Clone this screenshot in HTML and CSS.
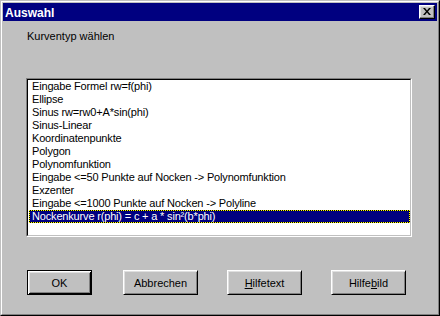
FILE: index.html
```html
<!DOCTYPE html>
<html lang="de">
<head>
<meta charset="utf-8">
<title>Auswahl</title>
<link rel="stylesheet" href="styles.css">
</head>
<body>
<div class="window">
  <div class="frame">
    <div class="titlebar">
      <span class="title">Auswahl</span>
      <button class="close" type="button" aria-label="Schließen">
        <svg width="8" height="7" viewBox="0 0 8 7"><path d="M0 0h2l2 2.4 2-2.4h2l-3 3.5 3 3.5h-2l-2-2.4-2 2.4h-2l3-3.5z" fill="#000"/></svg>
      </button>
    </div>
    <div class="body">
      <div class="label">Kurventyp wählen</div>
      <div class="listbox">
        <ul class="list">
          <li class="item">Eingabe Formel rw=f(phi)</li>
          <li class="item">Ellipse</li>
          <li class="item">Sinus rw=rw0+A*sin(phi)</li>
          <li class="item">Sinus-Linear</li>
          <li class="item">Koordinatenpunkte</li>
          <li class="item">Polygon</li>
          <li class="item">Polynomfunktion</li>
          <li class="item">Eingabe &lt;=50 Punkte auf Nocken -&gt; Polynomfunktion</li>
          <li class="item">Exzenter</li>
          <li class="item">Eingabe &lt;=1000 Punkte auf Nocken -&gt; Polyline</li>
          <li class="item selected">Nockenkurve r(phi) = c + a * sin²(b*phi)</li>
        </ul>
      </div>
      <div class="buttons">
        <button class="btn default ok" type="button">OK</button>
        <button class="btn" type="button">Abbrechen</button>
        <button class="btn" type="button"><u>H</u>ilfetext</button>
        <button class="btn" type="button">Hilfe<u>b</u>ild</button>
      </div>
    </div>
  </div>
</div>
</body>
</html>
```
FILE: styles.css
```css
html, body {
  margin: 0;
  padding: 0;
  background: #c0c0c0;
}
body {
  font-family: "Liberation Sans", Arial, sans-serif;
  font-size: 11px;
  color: #000;
}
.window {
  width: 440px;
  height: 316px;
  box-sizing: border-box;
  border: 1px solid;
  border-color: #c0c0c0 #000 #000 #c0c0c0;
  background: #c0c0c0;
}
.frame {
  height: 100%;
  box-sizing: border-box;
  border: 1px solid;
  border-color: #fff #808080 #808080 #fff;
  padding: 1px;
  display: flex;
  flex-direction: column;
}
.titlebar {
  height: 18px;
  background: #000080;
  display: flex;
  align-items: center;
  justify-content: space-between;
  padding: 0 2px 0 2px;
}
.title {
  color: #fff;
  font-weight: bold;
  font-size: 12px;
  line-height: 14px;
  margin-top: 1px;
}
.close {
  width: 16px;
  height: 14px;
  padding: 0;
  margin: 0;
  box-sizing: border-box;
  background: #c0c0c0;
  border: 1px solid;
  border-color: #fff #000 #000 #fff;
  box-shadow: inset -1px -1px #808080, inset 1px 1px #dfdfdf;
  display: flex;
  align-items: center;
  justify-content: center;
}
.close svg {
  display: block;
  margin: 0 0 1px 0;
}
.body {
  display: flex;
  flex-direction: column;
}
.label {
  margin: 9px 0 0 24px;
  line-height: 13px;
}
.listbox {
  margin: 35px 0 0 23px;
  width: 386px;
  height: 159px;
  box-sizing: border-box;
  border: 1px solid;
  border-color: #808080 #fff #fff #808080;
}
.list {
  list-style: none;
  margin: 0;
  padding: 0 0 0 1px;
  height: 100%;
  box-sizing: border-box;
  border: 1px solid;
  border-color: #000 #c0c0c0 #c0c0c0 #000;
  background: #fff;
}
.item {
  height: 13px;
  line-height: 11px;
  box-sizing: border-box;
  border: 1px solid transparent;
  padding: 0 0 0 2px;
  white-space: nowrap;
  letter-spacing: -0.17px;
}
.item.selected {
  color: #fff;
  border: 1px dotted #ffff00;
  background: linear-gradient(#000080, #000080) padding-box, #000;
}
.buttons {
  display: flex;
  margin: 33px 0 0 24px;
  gap: 29px;
}
.btn {
  width: 75px;
  height: 25px;
  box-sizing: border-box;
  margin: 0;
  padding: 0;
  font-family: "Liberation Sans", Arial, sans-serif;
  font-size: 11px;
  color: #000;
  background: #c0c0c0;
  border: 1px solid;
  border-color: #fff #000 #000 #fff;
  box-shadow: inset 1px 1px #dfdfdf, inset -1px -1px #808080;
}
.btn.default {
  border-color: #000;
  box-shadow: inset 1px 1px #fff, inset -1px -1px #000, inset 2px 2px #dfdfdf, inset -2px -2px #808080;
}
.btn.ok {
  width: 65px;
  margin-right: 2px;
}
```
